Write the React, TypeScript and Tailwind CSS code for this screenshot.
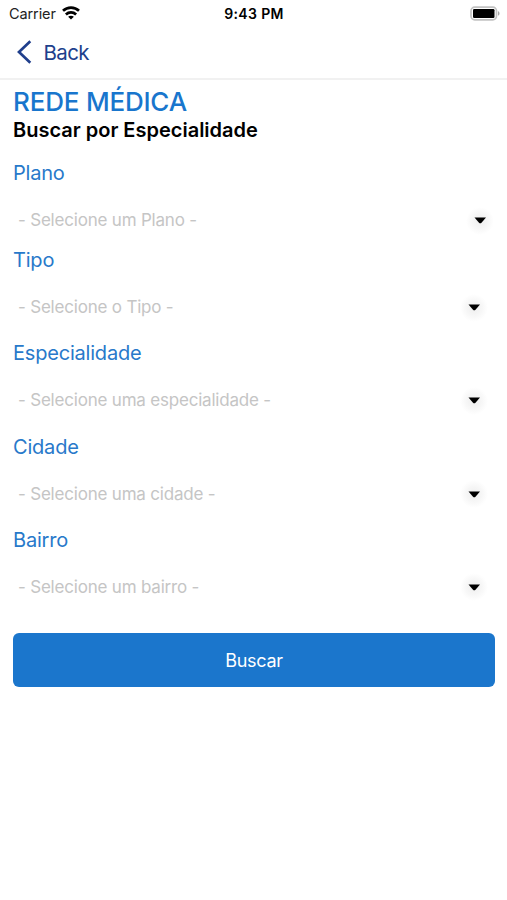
type Field = {
  label: string;
  placeholder: string;
  rowClass: string;
};

const fields: Field[] = [
  { label: "Plano", placeholder: "- Selecione um Plano -", rowClass: "h-[87px] pr-[13px]" },
  { label: "Tipo", placeholder: "- Selecione o Tipo -", rowClass: "h-[93px] pr-[19px]" },
  { label: "Especialidade", placeholder: "- Selecione uma especialidade -", rowClass: "h-[93.5px] pr-[19px]" },
  { label: "Cidade", placeholder: "- Selecione uma cidade -", rowClass: "h-[93px] pr-[19px]" },
  { label: "Bairro", placeholder: "- Selecione um bairro -", rowClass: "h-[93.5px] pr-[19px]" },
];

function WifiIcon() {
  return (
    <svg className="-mt-[3px] ml-[6px] h-[14px] w-[18px]" viewBox="0 0 18 14" fill="none" stroke="#000" strokeWidth="2.7">
      <path d="M1 4.8C5.5 .6 12.5 .6 17 4.8" />
      <path d="M3.9 8.4C6.8 5.7 11.2 5.7 14.1 8.4" />
      <path d="M9 13.6 6.1 10.8C7.7 9.3 10.3 9.3 11.9 10.8Z" fill="#000" stroke="none" />
    </svg>
  );
}

function BatteryIcon() {
  return (
    <svg className="-mt-[2px] h-[15px] w-[31px]" viewBox="0 0 31 15">
      <rect x="2" y="1.2" width="25.5" height="12.6" rx="3.7" fill="#fff" stroke="#c2c2c2" strokeWidth="1.7" />
      <rect x="4" y="3" width="21.5" height="9" rx="1.2" fill="#000" />
      <path d="M29 5.3C31 6 31 9 29 9.7Z" fill="#a8a8a8" />
    </svg>
  );
}

function Caret() {
  return (
    <span className="flex size-7 items-center justify-center rounded-full bg-[radial-gradient(circle,#eeeeee_0%,#f7f7f7_40%,#ffffff_70%)]">
      <svg className="h-[7px] w-[13px]" viewBox="0 0 13 7">
        <path d="M.5 .5H12L7.5 5.7Q6.2 7 5 5.7Z" fill="#000" />
      </svg>
    </span>
  );
}

export default function App() {
  return (
    <div className="h-[900px] w-full overflow-hidden bg-white font-['Inter','Liberation_Sans',sans-serif] text-black">
      <header className="h-20 border-b-2 border-[#f1f1f1]">
        <div className="grid h-7 grid-cols-3 items-center pl-[9px] pr-[7px]">
          <div className="flex items-center">
            <span className="text-[14.5px] leading-none tracking-[-0.1px] text-[#222]">Carrier</span>
            <WifiIcon />
          </div>
          <span className="-ml-[1px] text-center text-[14px] font-semibold leading-none tracking-[0.35px]">9:43 PM</span>
          <div className="flex justify-end"><BatteryIcon /></div>
        </div>
        <button className="flex h-12 items-center pl-4 text-[#203f8c]">
          <svg className="h-6 w-4" viewBox="0 0 16 24" fill="none" stroke="currentColor" strokeWidth="2.7">
            <path d="M14.3 1.3 3 12 14.3 22.7" />
          </svg>
          <span className="ml-[11.5px] pt-[2px] text-[20.5px] leading-none tracking-[-0.6px]">Back</span>
        </button>
      </header>

      <main className="pl-[13px] pr-[12px]">
        <h1 className="mt-[6px] text-[26px] font-medium leading-[32px] tracking-[-0.2px] text-[#1976cd]">REDE MÉDICA</h1>
        <h2 className="text-[20px] font-semibold leading-[25px]">Buscar por Especialidade</h2>

        <form className="mt-[17px]">
          {fields.map((f) => (
            <div key={f.label} className={`-mr-[12px] ${f.rowClass}`}>
              <label className="block text-[20px] leading-[27px] tracking-[-0.2px] text-[#2879ca]">{f.label}</label>
              <div className="mt-[19.5px] flex h-7 items-center justify-between pl-[5px]">
                <span className="text-[17px] leading-none tracking-[-0.2px] text-[#c5c5c5]">{f.placeholder}</span>
                <Caret />
              </div>
            </div>
          ))}
          <button type="button" className="mt-[13px] flex h-[54px] w-full items-center justify-center rounded-[6px] bg-[#1b76cc] text-[18px] tracking-[-0.3px] text-white">
            Buscar
          </button>
        </form>
      </main>
    </div>
  );
}
